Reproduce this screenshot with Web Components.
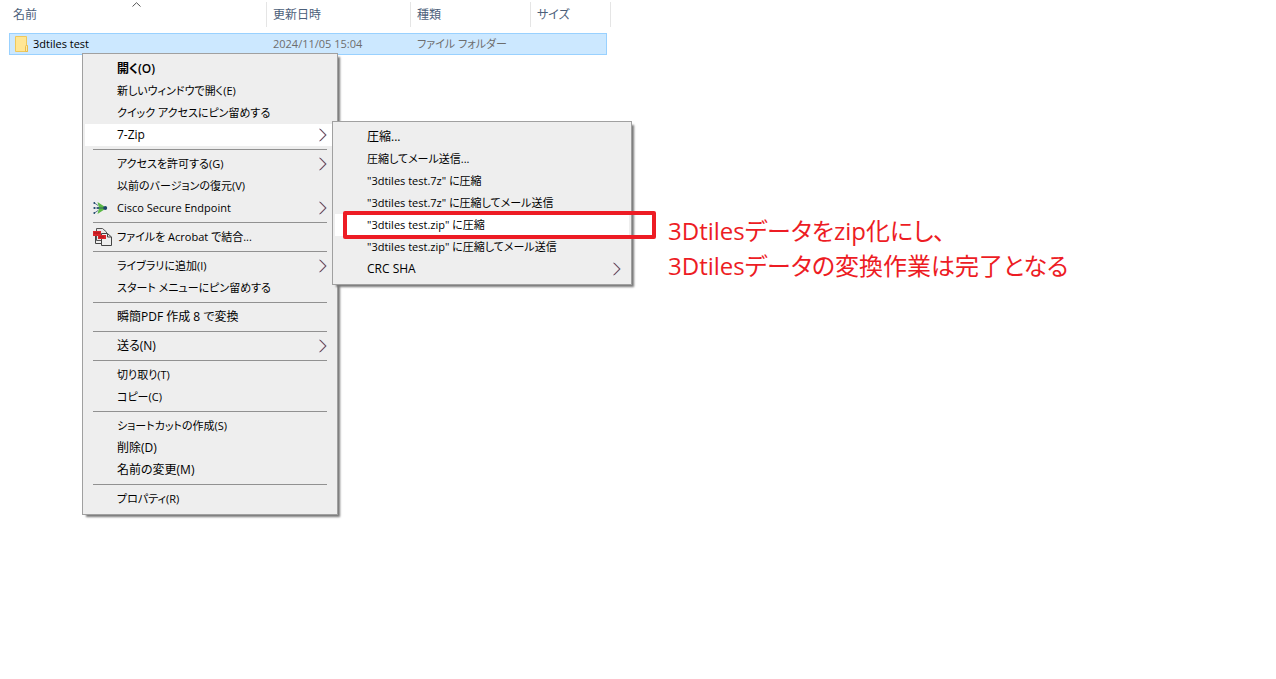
<!DOCTYPE html>
<html lang="ja">
<head>
<meta charset="utf-8">
<title>3dtiles test</title>
<style>
  body {
    margin: 0;
    min-height: 100vh;
    background: #fff;
    color: #000;
    font: 11px/22px "Open Sans", "Noto Sans CJK JP", sans-serif;
    font-feature-settings: "palt";
  }
</style>
</head>
<body>
<explorer-view>
  <file-list></file-list>
  <context-menu slot="menu">
    <menu-item wide class="default">開く(O)</menu-item>
    <menu-item>新しいウィンドウで開く(E)</menu-item>
    <menu-item>クイック アクセスにピン留めする</menu-item>
    <menu-item wide submenu active>7-Zip
      <context-menu slot="submenu">
        <menu-item wide>圧縮...</menu-item>
        <menu-item>圧縮してメール送信...</menu-item>
        <menu-item>"3dtiles test.7z" に圧縮</menu-item>
        <menu-item>"3dtiles test.7z" に圧縮してメール送信</menu-item>
        <menu-item active>"3dtiles test.zip" に圧縮
          <note-callout slot="note">3Dtilesデータをzip化にし、<br>3Dtilesデータの変換作業は完了となる</note-callout>
        </menu-item>
        <menu-item>"3dtiles test.zip" に圧縮してメール送信</menu-item>
        <menu-item wide submenu>CRC SHA</menu-item>
      </context-menu>
    </menu-item>
    <menu-separator></menu-separator>
    <menu-item submenu>アクセスを許可する(G)</menu-item>
    <menu-item>以前のバージョンの復元(V)</menu-item>
    <menu-item submenu><cisco-icon slot="icon"></cisco-icon>Cisco Secure Endpoint</menu-item>
    <menu-separator></menu-separator>
    <menu-item><combine-icon slot="icon"></combine-icon>ファイルを Acrobat で結合...</menu-item>
    <menu-separator></menu-separator>
    <menu-item submenu>ライブラリに追加(I)</menu-item>
    <menu-item>スタート メニューにピン留めする</menu-item>
    <menu-separator></menu-separator>
    <menu-item wide>瞬簡PDF 作成 8 で変換</menu-item>
    <menu-separator></menu-separator>
    <menu-item wide submenu>送る(N)</menu-item>
    <menu-separator></menu-separator>
    <menu-item>切り取り(T)</menu-item>
    <menu-item>コピー(C)</menu-item>
    <menu-separator></menu-separator>
    <menu-item>ショートカットの作成(S)</menu-item>
    <menu-item wide>削除(D)</menu-item>
    <menu-item wide>名前の変更(M)</menu-item>
    <menu-separator></menu-separator>
    <menu-item>プロパティ(R)</menu-item>
  </context-menu>
</explorer-view>

<script>
function define(name, html, setup) {
  const template = document.createElement('template');
  template.innerHTML = html;
  customElements.define(name, class extends HTMLElement {
    constructor() {
      super();
      this.attachShadow({ mode: 'open' }).append(template.content.cloneNode(true));
    }
    connectedCallback() {
      if (setup) setup(this, this.shadowRoot);
    }
  });
}

define('explorer-view', `
  <style>
    :host { display: block; position: relative; min-height: 100vh; overflow: hidden; }
    ::slotted([slot="menu"]) { position: absolute; left: 82px; top: 53px; width: 256px; }
  </style>
  <slot></slot>
  <slot name="menu"></slot>
`);

define('file-list', `
  <style>
    :host { display: block; padding: 0 9px; }
    table, thead, tbody { display: block; }
    tr { display: grid; grid-template-columns: 258px 144px 120px 80px; width: 602px; max-width: 100%; }
    thead { padding: 2px 0 6px; }
    th { position: relative; padding: 0 4px 0 6px; border-right: 1px solid #e5e5e5; height: 25px;
         font-size: 12px; font-weight: 400; text-align: left; color: #4c607a; line-height: 25px; }
    th:first-child { padding-left: 4px; }
    th svg { position: absolute; left: 50%; top: 0; margin-left: -6px; }
    tbody tr { box-sizing: border-box; width: 598px; height: 22px; line-height: 20px;
               background: #cce8ff; border: 1px solid #99d1ff; }
    td { padding: 0 0 0 5px; color: #6d6d6d; white-space: nowrap; overflow: hidden; }
    td:first-child { display: flex; align-items: center; gap: 5px; color: #000; padding-left: 5px; }
    td:first-child svg { flex: none; }
  </style>
  <table>
    <thead>
      <tr>
        <th scope="col" aria-sort="ascending">名前
          <svg width="9" height="5" viewBox="0 0 9 5" aria-hidden="true"><path d="M.5 4.5 4.5.7l4 3.8" fill="none" stroke="#555"/></svg>
        </th>
        <th scope="col">更新日時</th>
        <th scope="col">種類</th>
        <th scope="col">サイズ</th>
      </tr>
    </thead>
    <tbody>
      <tr>
        <td>
          <svg width="13" height="16" viewBox="0 0 13 16" aria-hidden="true">
            <path d="M.5.5h11v9h1v6H.5z" fill="#ffe694" stroke="#efc85c"/>
            <path d="M10.500 15.500V10.500l1-1.500 1 1v5.500z" fill="#ffe9a6" stroke="#e9bd4c"/>
          </svg>3dtiles test</td>
        <td>2024/11/05 15:04</td>
        <td>ファイル フォルダー</td>
        <td></td>
      </tr>
    </tbody>
  </table>
`);

define('context-menu', `
  <style>
    :host { display: block; box-sizing: border-box; padding: 4px 2px; background: #eee; font-size: 11px;
            border: 1px solid #a0a0a0; box-shadow: 3px 3px 2px -1px #777; }
  </style>
  <slot></slot>
`, host => host.setAttribute('role', 'menu'));

define('menu-separator', `
  <style>
    :host { display: block; padding: 3px 8px; }
    hr { margin: 0; border: 0; height: 1px; background: #919191; }
  </style>
  <hr>
`);

define('menu-item', `
  <style>
    :host { display: block; position: relative; }
    :host([wide]) { font-size: 12px; }
    button { display: grid; grid-template-columns: 32px 1fr 8px; align-items: center; width: 100%;
             height: 22px; margin: 0; padding: 0 8px 0 0; border: 0; background: none; color: inherit;
             font: inherit; font-feature-settings: inherit; text-align: left; white-space: nowrap; }
    :host([active]) button { background: #fff; }
    :host(.default) button { font-weight: 600; }
    .icon { display: flex; padding-left: 8px; }
    .arrow { display: none; }
    :host([submenu]) .arrow { display: block; }
    ::slotted([slot="submenu"]) { position: absolute; z-index: 1; left: 247px; top: -3px; width: 300px; }
    ::slotted([slot="note"]) { position: absolute; z-index: 2; left: 8px; top: -3px; }
  </style>
  <button type="button" role="menuitem">
    <span class="icon"><slot name="icon"></slot></span>
    <span><slot></slot></span>
    <svg class="arrow" width="8" height="14" viewBox="0 0 8 14" fill="none" aria-hidden="true">
      <path d="M1.200.8 7.300 7l-6.100 6.200" stroke="#3f8fd0"/>
      <path d="M.5.8 6.600 7 .5 13.200" stroke="#7c2626"/>
    </svg>
  </button>
  <slot name="submenu"></slot>
  <slot name="note"></slot>
`);

define('note-callout', `
  <style>
    :host { display: flex; align-items: flex-start; gap: 12px; color: #ed1c24; pointer-events: none;
            font-size: 24px; line-height: 35px; white-space: nowrap; }
    .frame { box-sizing: border-box; width: 313px; height: 28px; border: 4px solid #ed1c24; border-radius: 2px; }
    p { margin: 2px 0 0; }
  </style>
  <span class="frame"></span>
  <p><slot></slot></p>
`);

define('cisco-icon', `
  <style>:host { display: block; height: 14px; } svg { display: block; }</style>
  <svg width="15" height="14" viewBox="0 0 15 14" aria-hidden="true">
    <path d="M4.500 1 11 5.200v3.600L4.500 13l1.500-6z" fill="#5cb947"/>
    <path d="M1.500 2 5 4.500M1 7h11M1.500 12 5 9.500" stroke="#1d4468" stroke-width=".7" fill="none"/>
    <g fill="#1d4468"><circle cx="1.300" cy="2" r=".9"/><circle cx="1.300" cy="7" r=".9"/><circle cx="1.300" cy="12" r=".9"/><circle cx="5" cy="7" r="1"/><circle cx="12.200" cy="7" r="2"/></g>
  </svg>
`);

define('combine-icon', `
  <style>:host { display: block; height: 18px; } svg { display: block; }</style>
  <svg width="19" height="18" viewBox="0 0 19 18" aria-hidden="true">
    <path d="M3.500.5h6l4 3.500v8.500h-10z" fill="#e8e8e8" stroke="#555"/>
    <path d="M0 3h8v5H0z" fill="#d9252a"/>
    <path d="M8.500 5.500h6l4 3.500v8.500h-10z" fill="#eee" stroke="#444"/>
    <path d="M14.500 5.500v3.500h4" fill="none" stroke="#444"/>
    <path d="M5 7h8v4H5z" fill="#d9252a"/>
    <path d="M2.500 8v7.500h6" fill="none" stroke="#444"/>
    <path d="M1 5h6M6 9h5" stroke="#a3151a"/>
  </svg>
`);
</script>
</body>
</html>
